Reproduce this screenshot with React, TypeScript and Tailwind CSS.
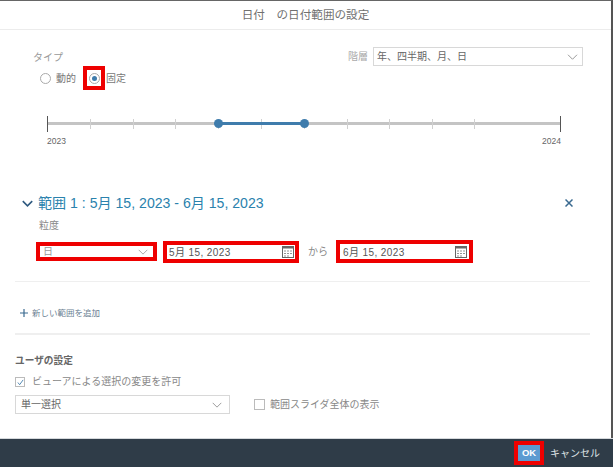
const font = { fontFamily: '"Liberation Sans", "Noto Sans CJK JP", sans-serif' };

function Chevron({ className, weight = 1 }: { className: string; weight?: number }) {
  return (
    <svg viewBox="0 0 14 8" className={className} fill="none" stroke="currentColor" strokeWidth={weight}>
      <path d="M1 1l6 6 6-6" />
    </svg>
  );
}

function CalendarIcon() {
  return (
    <svg viewBox="0 0 12 12" className="h-[12px] w-[12px] text-[#666]" fill="none" stroke="currentColor">
      <rect x="0.5" y="0.5" width="11" height="11" />
      <path d="M0.5 1.5h11" strokeWidth="2" />
      <path d="M2 5h2M5 5h2M8 5h2M2 7.5h2M5 7.5h2M8 7.5h2M2 10h2M5 10h2" strokeWidth="1" opacity="0.7" />
    </svg>
  );
}

const ticks = [0, 43, 86, 128, 171, 214, 257, 300, 342, 385, 427, 513];

function RangeSlider() {
  return (
    <div className="mx-[47px] mt-[26px] w-[514px]">
      <div className="relative h-[16px]">
        <div className="absolute left-0 right-0 top-[6px] h-[3px] bg-[#c4c4c4]" />
        {ticks.map((x, index) => (
          <div
            key={x}
            className={
              index === 0 || index === ticks.length - 1
                ? "absolute top-0 h-[16px] w-px bg-[#555]"
                : "absolute top-[3px] h-[10px] w-px bg-[#d0d0d0]"
            }
            style={{ left: x }}
          />
        ))}
        <div className="absolute left-[172px] top-[6px] h-[3px] w-[85px] bg-[#3f7cac]" />
        <div className="absolute left-[167px] top-[3px] h-[9px] w-[9px] rounded-full bg-[#3f7cac]" />
        <div className="absolute left-[253px] top-[3px] h-[9px] w-[9px] rounded-full bg-[#3f7cac]" />
      </div>
      <div className="mt-[3px] flex justify-between text-[8.5px] leading-[12px] text-[#666]">
        <span>2023</span>
        <span>2024</span>
      </div>
    </div>
  );
}

export default function App() {
  return (
    <div className="flex h-[467px] w-[613px] flex-col overflow-hidden bg-white" style={font}>
      <div className="flex min-h-0 flex-1 flex-col border-r-2 border-t border-r-[#555] border-t-[#666]">
        <header className="flex h-[29px] items-center justify-center border-b border-[#ececec] text-[11.6px] text-[#707070]">
          日付　の日付範囲の設定
        </header>

        <div className="flex justify-between pl-[33px] pr-[28px]">
          <div>
            <div className="mt-[21px] text-[10px] leading-[14px] text-[#999]">タイプ</div>
            <div className="ml-[7px] mt-[1px] flex h-[24px] items-center text-[10px] text-[#777]">
              <span className="h-[11px] w-[11px] rounded-full border border-[#aaa]" />
              <span className="ml-[5px]">動的</span>
              <span className="ml-[7px] flex h-[24px] w-[22px] items-center justify-center border-4 border-[#ee0000]">
                <span className="flex h-[11px] w-[11px] items-center justify-center rounded-full border border-[#aaa]">
                  <span className="h-[5px] w-[5px] rounded-full bg-[#3f7cac]" />
                </span>
              </span>
              <span className="ml-[1px]">固定</span>
            </div>
          </div>
          <div className="mt-[17px] flex h-[19px] items-center">
            <span className="mr-[5px] text-[10px] text-[#aaa]">階層</span>
            <div className="flex h-[19px] w-[210px] items-center justify-between border border-[#d8d8d8] pl-[3px] pr-[4px] text-[10px] text-[#666]">
              <span>年、四半期、月、日</span>
              <Chevron className="h-[6px] w-[11px] text-[#777]" />
            </div>
          </div>
        </div>

        <RangeSlider />

        <div className="mt-[47px] flex items-center justify-between pl-[22px] pr-[38px]">
          <div className="flex items-center">
            <Chevron className="h-[7px] w-[11px] text-[#2f5a80]" weight={2} />
            <span className="ml-[5px] text-[14.1px] leading-[18px] text-[#2a82ad]">
              範囲 1 : 5月 15, 2023 - 6月 15, 2023
            </span>
          </div>
          <svg viewBox="0 0 8 8" className="h-[8px] w-[8px] text-[#3a6a90]" fill="none" stroke="currentColor" strokeWidth="1.5">
            <path d="M0.5 0.5l7 7M7.5 0.5l-7 7" />
          </svg>
        </div>

        <div className="ml-[39px] mt-[7px] text-[10px] leading-[14px] text-[#888]">粒度</div>

        <div className="ml-[36px] mt-[7px] flex items-center text-[10px] leading-[14px] text-[#555]">
          <div className="flex h-[19px] w-[121px] items-center justify-between border-4 border-[#ee0000] pl-[3px] pr-[5px] text-[#999]">
            <span>日</span>
            <Chevron className="h-[6px] w-[10px] text-[#888]" />
          </div>
          <div className="ml-[6px] flex h-[22px] w-[136px] items-center justify-between border-4 border-[#ee0000] pl-[2px] pr-[1px]">
            <span className="translate-y-px tracking-[0.4px]">5月 15, 2023</span>
            <CalendarIcon />
          </div>
          <span className="ml-[9px] text-[#888]">から</span>
          <div className="ml-[8px] flex h-[23px] w-[137px] items-center justify-between border-4 border-[#ee0000] pl-[3px] pr-[2px]">
            <span className="translate-y-px tracking-[0.4px]">6月 15, 2023</span>
            <CalendarIcon />
          </div>
        </div>

        <div className="ml-[15px] mr-[21px] mt-[18px] h-px bg-[#efefef]" />

        <div className="ml-[20px] mt-[25px] flex items-center text-[8.5px] leading-[12px] text-[#6b7f92]">
          <svg viewBox="0 0 8 8" className="h-[8px] w-[8px] text-[#3a6a90]" fill="none" stroke="currentColor" strokeWidth="1.2">
            <path d="M4 0v8M0 4h8" />
          </svg>
          <span className="ml-[4px]">新しい範囲を追加</span>
        </div>

        <div className="ml-[15px] mr-[21px] mt-[14px] h-[2px] bg-[#efefef]" />

        <div className="ml-[15px] mt-[19px] text-[9.7px] font-bold leading-[14px] text-[#666]">ユーザの設定</div>

        <div className="ml-[15px] mt-[7px] flex items-center text-[10px] leading-[14px] text-[#888]">
          <span className="flex h-[10px] w-[10px] items-center justify-center border border-[#bbb]">
            <svg viewBox="0 0 8 8" className="h-[7px] w-[7px] text-[#3f7cac]" fill="none" stroke="currentColor" strokeWidth="1">
              <path d="M1 4l2 2.5L7 1" />
            </svg>
          </span>
          <span className="ml-[7px]">ビューアによる選択の変更を許可</span>
        </div>

        <div className="ml-[15px] mt-[6px] flex items-center">
          <div className="flex h-[19px] w-[215px] items-center justify-between border border-[#d8d8d8] pl-[5px] pr-[7px] text-[10px] text-[#666]">
            <span>単一選択</span>
            <Chevron className="h-[6px] w-[10px] text-[#777]" />
          </div>
          <span className="ml-[24px] h-[11px] w-[11px] border border-[#bbb]" />
          <span className="ml-[5px] text-[10px] text-[#888]">範囲スライダ全体の表示</span>
        </div>
      </div>

      <footer className="flex h-[29px] shrink-0 items-center justify-end border-t border-[#d5d9dc] bg-[#2f3c48] pr-[13px]">
        <div className="mr-[6px] flex h-[24px] w-[30px] items-center justify-center border-4 border-[#ee0000] bg-[#5b9bd1] text-[9.5px] font-bold text-white">
          OK
        </div>
        <span className="text-[10px] text-[#dfe3e6]">キャンセル</span>
      </footer>
    </div>
  );
}
